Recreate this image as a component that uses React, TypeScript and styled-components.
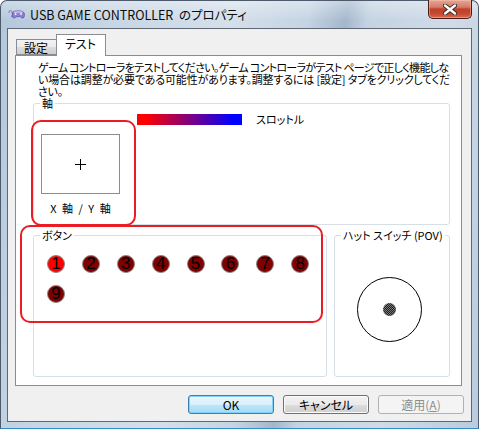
import React from "react";
import styled, { createGlobalStyle } from "styled-components";

const GlobalStyle = createGlobalStyle`
  html, body {
    margin: 0;
    padding: 0;
  }
  body {
    width: 479px;
    height: 429px;
    overflow: hidden;
    background: #ffffff;
    font-family: "Noto Sans CJK JP", "Liberation Sans", sans-serif;
    font-size: 11px;
    font-feature-settings: "palt";
    color: #000;
  }
`;

const buttonNumbers = [1, 2, 3, 4, 5, 6, 7, 8, 9];
const pressed = [1];

const App: React.FC = () => {
  return (
    <>
      <GlobalStyle />
      <Window>
        <TitleBar>
          <AppIcon />
          <Title>USB GAME CONTROLLER&nbsp; のプロパティ</Title>
          <CloseButton aria-label="閉じる">
            <svg width="14" height="11" viewBox="0 0 14 11">
              <path
                d="M2 1.5 L12 9.5 M12 1.5 L2 9.5"
                stroke="#3b2420"
                strokeWidth="4.2"
                strokeLinecap="round"
              />
              <path
                d="M2 1.5 L12 9.5 M12 1.5 L2 9.5"
                stroke="#ffffff"
                strokeWidth="2.4"
                strokeLinecap="round"
              />
            </svg>
          </CloseButton>
        </TitleBar>

        <Client>
          <TabStrip>
            <Tab>設定</Tab>
            <Tab $active>テスト</Tab>
          </TabStrip>

          <Panel>
            <Description>
              <Line $tracking={-0.7}>
                ゲーム コントローラをテストしてください。ゲーム コントローラがテスト ページで正しく機能しな
              </Line>
              <Line $tracking={-0.15}>
                い場合は調整が必要である可能性があります。調整するには [設定] タブをクリックしてくだ
              </Line>
              <Line $tracking={-0.25}>さい。</Line>
            </Description>

            <Group>
              <Legend>軸</Legend>
              <AxisBody>
                <XYColumn>
                  <XYBox>
                    <Crosshair />
                  </XYBox>
                  <XYLabel>X 軸 / Y 軸</XYLabel>
                </XYColumn>
                <Throttle>
                  <ThrottleBar />
                  <span>スロットル</span>
                </Throttle>
              </AxisBody>
            </Group>

            <LowerRow>
              <Group $width={294}>
                <Legend>ボタン</Legend>
                <ButtonGrid>
                  {buttonNumbers.map((n) => (
                    <Lamp key={n} $on={pressed.includes(n)}>
                      {n}
                    </Lamp>
                  ))}
                </ButtonGrid>
              </Group>
              <Group $width={116}>
                <Legend>ハット スイッチ (POV)</Legend>
                <PovBody>
                  <PovRing>
                    <PovDot />
                  </PovRing>
                </PovBody>
              </Group>
            </LowerRow>

            <Mark $left={15} $top={64} $w={105} $h={106} />
            <Mark $left={4} $top={169} $w={303} $h={98} />
          </Panel>

          <ButtonRow>
            <PushButton $variant="default">OK</PushButton>
            <PushButton>キャンセル</PushButton>
            <PushButton $variant="disabled" disabled>
              適用(<u>A</u>)
            </PushButton>
          </ButtonRow>
        </Client>
      </Window>
    </>
  );
};

export default App;

const AppIcon: React.FC = () => (
  <IconBox>
    <svg width="17" height="13" viewBox="0 0 17 13">
      <path
        d="M1 5 C1 2 3 2 4 4 C5 6 5 8 3 9"
        fill="none"
        stroke="#8d98a8"
        strokeWidth="1.4"
      />
      <path
        d="M5 4 C6 2.5 14 2.5 15.5 4 C17 6 16.6 9.5 15 10 C13.6 10.4 12.8 8.6 11.6 8.6 L9 8.6 C7.8 8.6 7 10.4 5.6 10 C4 9.5 3.8 6 5 4 Z"
        fill="#8f7fd6"
        stroke="#5c4fa3"
        strokeWidth="0.8"
      />
      <path
        d="M6 4.4 C8 3.6 12.6 3.6 14.6 4.4"
        fill="none"
        stroke="#d9d3f6"
        strokeWidth="1.2"
      />
      <circle cx="13" cy="6" r="0.9" fill="#f4f0ff" />
      <circle cx="7.6" cy="6.2" r="0.9" fill="#f4f0ff" />
    </svg>
  </IconBox>
);

const Window = styled.div`
  position: relative;
  box-sizing: border-box;
  width: 479px;
  height: 429px;
  display: flex;
  flex-direction: column;
  padding: 0 6px 6px 6px;
  border: 1px solid #4c5a6b;
  border-bottom-color: #2f8fc9;
  border-radius: 7px 7px 0 0;
  background:
    linear-gradient(180deg, rgba(255, 255, 255, 0.35) 0px, rgba(255, 255, 255, 0) 20px),
    linear-gradient(
      100deg,
      #b3c7dc 0%,
      #c6d5e4 18%,
      #d4dfea 42%,
      #c5d4e3 56%,
      #a3b7cb 63%,
      #c4d3e2 67%,
      #d0dbe7 82%,
      #b9cbdd 100%
    );
`;

const TitleBar = styled.div`
  height: 27px;
  display: flex;
  align-items: center;
`;

const IconBox = styled.span`
  display: flex;
  margin-left: 1px;
  width: 17px;
  height: 13px;
`;

const Title = styled.span`
  margin-left: 5px;
  font-size: 12.5px;
  line-height: 16px;
  color: #0b0b0b;
  white-space: nowrap;
`;

const CloseButton = styled.button`
  align-self: flex-start;
  margin: -1px 0 0 auto;
  box-sizing: border-box;
  width: 44px;
  height: 19px;
  padding: 0;
  display: flex;
  align-items: center;
  justify-content: center;
  border: 1px solid #4a1c16;
  border-top: none;
  border-radius: 0 0 5px 5px;
  background: linear-gradient(
    180deg,
    #e3a899 0%,
    #d67a66 40%,
    #c0412c 50%,
    #c4472f 75%,
    #db6a52 100%
  );
  box-shadow: inset 0 0 0 1px rgba(255, 200, 180, 0.45);
`;

const Client = styled.div`
  flex: 1;
  display: flex;
  flex-direction: column;
  padding: 5px 0 7px 0;
  border: 1px solid #5e6874;
  background: #f0f0f0;
`;

const TabStrip = styled.div`
  display: flex;
  align-items: flex-end;
  padding-left: 8px;
  position: relative;
  z-index: 1;
  font-size: 12px;
`;

const Tab = styled.div<{ $active?: boolean }>`
  box-sizing: border-box;
  height: ${(p) => (p.$active ? "22px" : "16px")};
  margin-bottom: ${(p) => (p.$active ? "-1px" : "0")};
  padding: ${(p) => (p.$active ? "1px 9px 0 8px" : "0 8px 0 7px")};
  border: 1px solid #898c95;
  border-bottom: ${(p) => (p.$active ? "none" : "1px solid #898c95")};
  border-right: ${(p) => (p.$active ? "1px solid #898c95" : "none")};
  background: ${(p) =>
    p.$active
      ? "#ffffff"
      : "linear-gradient(180deg, #f2f2f2 0%, #ebebeb 50%, #dddddd 51%, #cfcfcf 100%)"};
  line-height: 15px;
  white-space: nowrap;
`;

const Panel = styled.div`
  position: relative;
  box-sizing: border-box;
  height: 331px;
  margin: 0 9px 0 7px;
  padding: 5px 11px 8px 17px;
  display: flex;
  flex-direction: column;
  border: 1px solid #898c95;
  background: #ffffff;
`;

const Description = styled.div`
  margin-left: 5px;
  display: flex;
  flex-direction: column;
`;

const Line = styled.div<{ $tracking: number }>`
  height: 12px;
  line-height: 12px;
  white-space: nowrap;
  letter-spacing: ${(p) => p.$tracking}px;
`;

const Group = styled.fieldset<{ $width?: number }>`
  box-sizing: border-box;
  margin: 0;
  padding: 0;
  min-width: 0;
  width: ${(p) => (p.$width ? `${p.$width}px` : "auto")};
  border: 1px solid #d5dfe5;
  border-radius: 3px;
`;

const Legend = styled.legend`
  margin-left: 6px;
  padding: 0 2px;
  line-height: 13px;
  white-space: nowrap;
`;

const AxisBody = styled.div`
  display: flex;
  align-items: flex-start;
  padding: 3px 0 10px 7px;
`;

const XYColumn = styled.div`
  display: flex;
  flex-direction: column;
  align-items: center;
  margin-top: 21px;
`;

const XYBox = styled.div`
  box-sizing: border-box;
  width: 79px;
  height: 60px;
  border: 1px solid #8c8c8c;
  display: flex;
  align-items: center;
  justify-content: center;
`;

const Crosshair = styled.span`
  width: 11px;
  height: 11px;
  background:
    linear-gradient(#000, #000) center / 11px 1px no-repeat,
    linear-gradient(#000, #000) center / 1px 11px no-repeat;
`;

const XYLabel = styled.div`
  margin-top: 8px;
  line-height: 12px;
  word-spacing: 3px;
  white-space: nowrap;
`;

const Throttle = styled.div`
  display: flex;
  align-items: center;
  gap: 14px;
  margin-left: 17px;
  line-height: 12px;
`;

const ThrottleBar = styled.div`
  width: 105px;
  height: 11px;
  background: linear-gradient(90deg, #ff0000 8%, #800080 50%, #0000ff 92%);
`;

const LowerRow = styled.div`
  flex: 1;
  display: flex;
  gap: 7px;
  margin-top: 4px;
`;

const ButtonGrid = styled.div`
  display: grid;
  grid-template-columns: repeat(8, 18px);
  column-gap: 16.9px;
  row-gap: 12px;
  padding: 13px 0 0 13px;
`;

const Lamp = styled.div<{ $on?: boolean }>`
  box-sizing: border-box;
  width: 18px;
  height: 18px;
  border-radius: 50%;
  border: 1px solid #8a8a8a;
  background: ${(p) => (p.$on ? "#ff0000" : "#800000")};
  display: flex;
  align-items: center;
  justify-content: center;
  font-family: "Liberation Sans", Arial, sans-serif;
  font-size: 17px;
  line-height: 18px;
  color: #000;
`;

const PovBody = styled.div`
  height: 134px;
  display: flex;
  align-items: center;
  justify-content: center;
  padding-right: 5px;
`;

const PovRing = styled.div`
  box-sizing: border-box;
  width: 65px;
  height: 65px;
  border-radius: 50%;
  border: 1px solid #000;
  display: flex;
  align-items: center;
  justify-content: center;
`;

const PovDot = styled.div`
  width: 13px;
  height: 13px;
  border-radius: 50%;
  background: repeating-conic-gradient(#1e1e1e 0 25%, #7a7a7a 0 50%) 0 0 / 2px 2px;
`;

const Mark = styled.div<{ $left: number; $top: number; $w: number; $h: number }>`
  position: absolute;
  left: ${(p) => p.$left}px;
  top: ${(p) => p.$top}px;
  width: ${(p) => p.$w}px;
  height: ${(p) => p.$h}px;
  box-sizing: border-box;
  border: 2px solid #ec1c24;
  border-radius: 10px;
  pointer-events: none;
`;

const ButtonRow = styled.div`
  display: flex;
  justify-content: flex-end;
  gap: 9px;
  margin-top: 9px;
  padding-right: 7px;
`;

const PushButton = styled.button<{ $variant?: "default" | "disabled" }>`
  box-sizing: border-box;
  width: 86px;
  height: 19px;
  padding: 0;
  border-radius: 3px;
  font-family: "Noto Sans CJK JP", "Liberation Sans", sans-serif;
  font-size: 12px;
  font-feature-settings: "palt";
  line-height: 15px;
  border: 1px solid
    ${(p) =>
      p.$variant === "default" ? "#3c7fb1" : p.$variant === "disabled" ? "#adb2b5" : "#707070"};
  color: ${(p) => (p.$variant === "disabled" ? "#8d8d8d" : "#000")};
  background: ${(p) =>
    p.$variant === "default"
      ? "linear-gradient(180deg, #eaf6fd 0%, #d9f0fc 50%, #bee6fd 51%, #a7d9f5 100%)"
      : p.$variant === "disabled"
      ? "#f4f4f4"
      : "linear-gradient(180deg, #f2f2f2 0%, #ebebeb 50%, #dddddd 51%, #cfcfcf 100%)"};
  box-shadow: ${(p) =>
    p.$variant === "default"
      ? "inset 0 0 0 1px #7fd3f7"
      : p.$variant === "disabled"
      ? "none"
      : "inset 0 0 0 1px #fcfcfc"};

  u {
    text-underline-offset: 1px;
  }
`;
